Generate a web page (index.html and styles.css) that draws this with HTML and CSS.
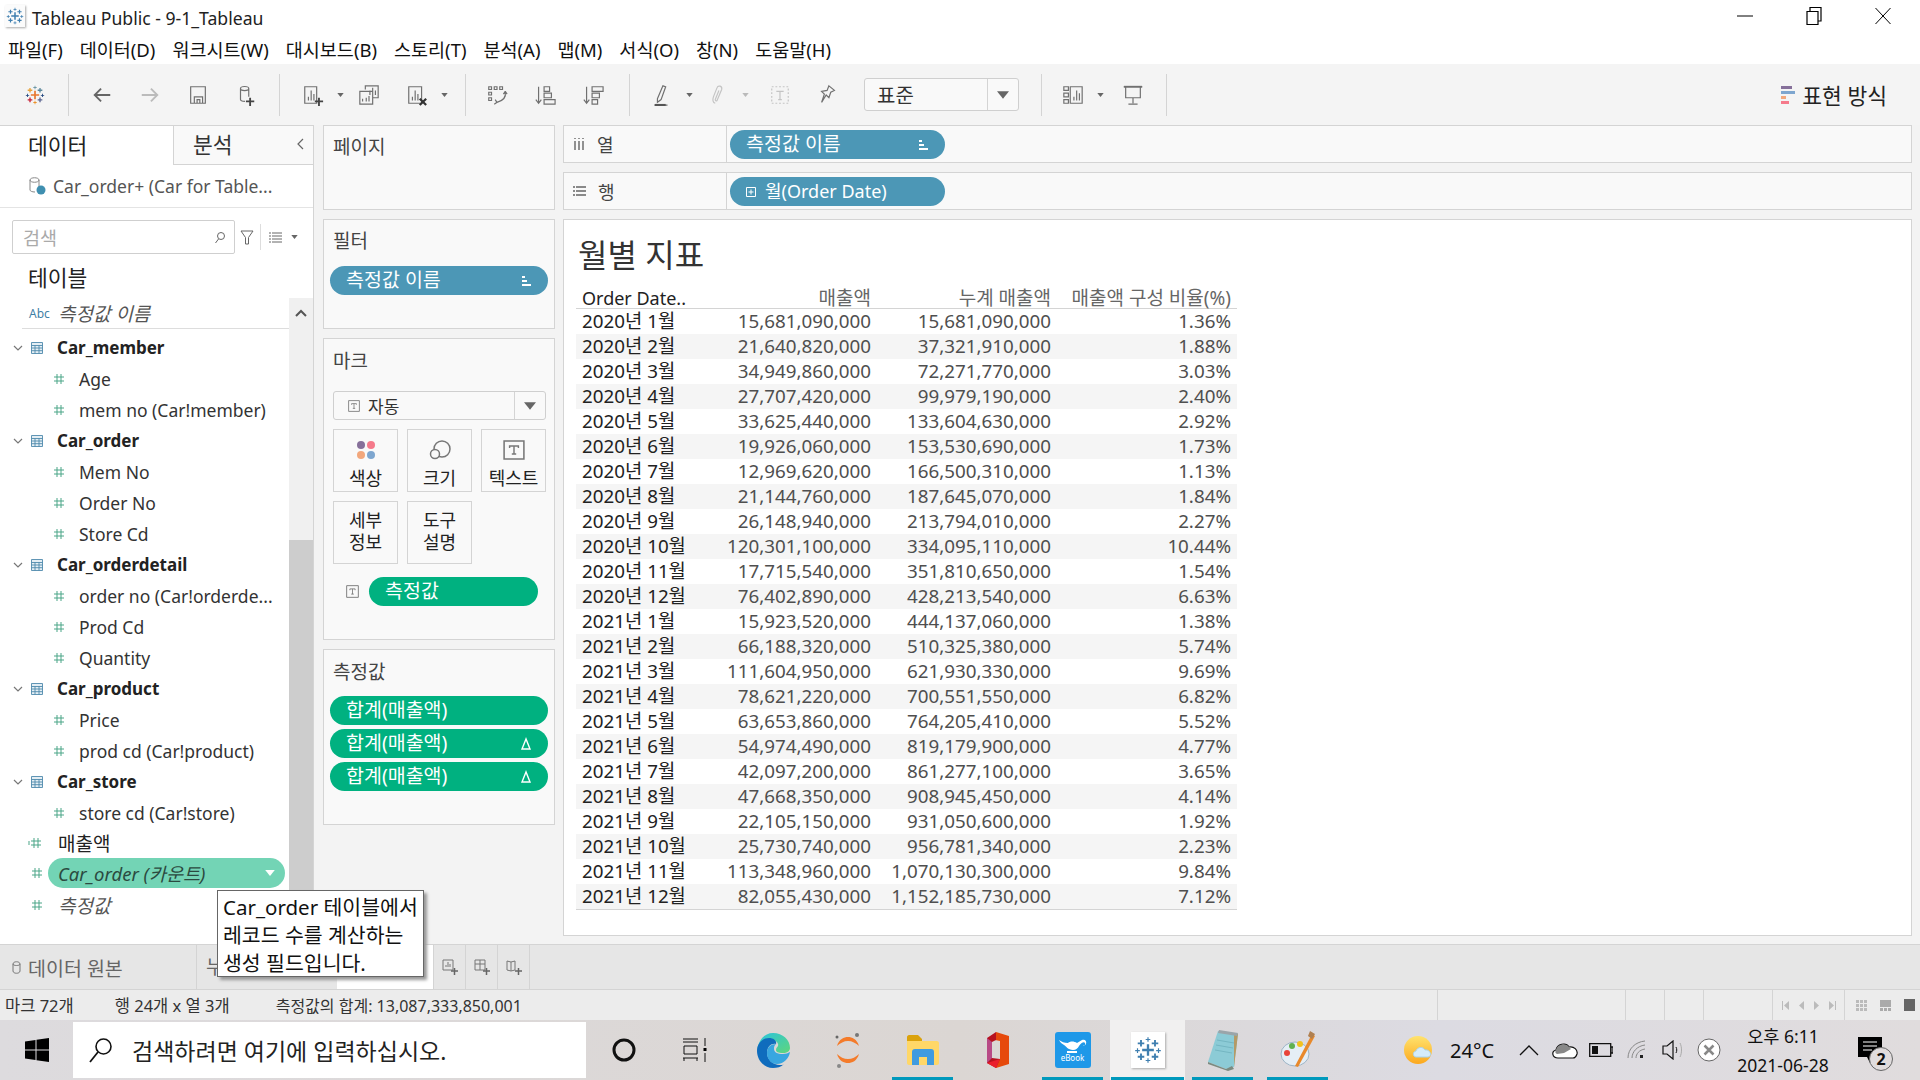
FILE: index.html
```html
<!DOCTYPE html>
<html lang="ko">

<head>
    <meta charset="UTF-8">
    <title>Tableau Public - 9-1_Tableau</title>
    <link rel="stylesheet" href="styles.css">
</head>

<body>

    <svg class="defs" width="0" height="0">
        <defs>
            <symbol id="tableau" viewBox="0 0 24 24">
                <path d="M11 7h2v4h4v2h-4v4h-2v-4H7v-2h4z" />
                <path d="M5.2 3.500h1.600v2h2v1.600h-2v2H5.200v-2h-2V5.500h2zM17.200 3.500h1.600v2h2v1.600h-2v2h-1.600v-2h-2V5.500h2zM5.200 15h1.600v2h2v1.600h-2v2H5.200v-2h-2V17h2zM17.200 15h1.600v2h2v1.600h-2v2h-1.600v-2h-2V17h2z" />
                <path d="M11.500 1h1v1.500H14v1h-1.500V5h-1V3.500H10v-1h1.500zM11.500 19h1v1.500H14v1h-1.500V23h-1v-1.500H10v-1h1.500zM2.500 10.500h1V12H5v1H3.500v1.500h-1V13H1v-1h1.500zM20.500 10.500h1V12H23v1h-1.500v1.500h-1V13H19v-1h1.500z" />
            </symbol>
            <symbol id="hash" viewBox="0 0 12 12">
                <path d="M4 1v10M8 1v10M1 4h10M1 8h10" fill="none" stroke="#4aa587" stroke-width="1" />
            </symbol>
            <symbol id="grid" viewBox="0 0 12 12">
                <path d="M.5.500h11v11H.500zM.5 3.500h11M.5 6h11M.5 8.700h11M4 3.500v8M8 3.500v8" fill="#e4eef4" stroke="#4f8aad" stroke-width=".9" />
            </symbol>
            <symbol id="chev" viewBox="0 0 10 6">
                <path d="M1 1l4 4 4-4" fill="none" stroke="#777" stroke-width="1.200" />
            </symbol>
            <symbol id="sortbars" viewBox="0 0 12 12">
                <path d="M2 1h3v2H2zM2 5h5v2H2zM2 9h9v2H2z" fill="#fff" />
            </symbol>
            <symbol id="delta" viewBox="0 0 12 14">
                <path d="M6 2L2 12h8z" fill="none" stroke="#fff" stroke-width="1.400" />
            </symbol>
            <symbol id="tbox" viewBox="0 0 20 20">
                <path d="M1 1h18v18H1z" fill="none" stroke="#777" stroke-width="1.400" />
                <path d="M6 8V6h8v2M10 6v8M8 14h4" fill="none" stroke="#777" stroke-width="1.300" />
            </symbol>
            <symbol id="caret" viewBox="0 0 8 5">
                <path d="M0 0h8L4 5z" fill="#666" />
            </symbol>
        </defs>
    </svg>

    <header class="titlebar">
        <span class="app-icon"><svg class="logo-blue" width="18" height="18"><use href="#tableau" /></svg></span>
        <span class="app-title">Tableau Public - 9-1_Tableau</span>
        <div class="win-btns">
            <svg width="16" height="16" viewBox="0 0 16 16"><path d="M0 8h16" stroke="#000" /></svg>
            <svg width="16" height="20" viewBox="0 0 16 20"><path d="M1 5.500h11v13H1zM4 5V1.500h11V15h-3" fill="none" stroke="#000" stroke-width="1.200" /></svg>
            <svg width="16" height="20" viewBox="0 0 16 20"><path d="M.5 2l15 16M15.500 2L.5 18" stroke="#000" fill="none" /></svg>
        </div>
    </header>

    <nav class="menubar">
        <span>파일(F)</span>
        <span>데이터(D)</span>
        <span>워크시트(W)</span>
        <span>대시보드(B)</span>
        <span>스토리(T)</span>
        <span>분석(A)</span>
        <span>맵(M)</span>
        <span>서식(O)</span>
        <span>창(N)</span>
        <span>도움말(H)</span>
    </nav>

    <div class="toolbar">
        <span class="tool first"><svg width="20" height="20" viewBox="0 0 24 24">
            <path d="M11 7h2v4h4v2h-4v4h-2v-4H7v-2h4z" fill="#e8762d" />
            <path d="M5.200 3.500h1.600v2h2v1.600h-2v2H5.200v-2h-2V5.500h2z" fill="#e8a33d" />
            <path d="M17.200 3.500h1.600v2h2v1.600h-2v2h-1.600v-2h-2V5.500h2z" fill="#5b879b" />
            <path d="M5.200 15h1.600v2h2v1.600h-2v2H5.200v-2h-2V17h2z" fill="#c72035" />
            <path d="M17.200 15h1.600v2h2v1.600h-2v2h-1.600v-2h-2V17h2z" fill="#5b6591" />
            <path d="M11.500 1h1v1.500H14v1h-1.500V5h-1V3.500H10v-1h1.500z" fill="#7099a6" />
            <path d="M11.500 19h1v1.500H14v1h-1.500V23h-1v-1.500H10v-1h1.500z" fill="#eb912b" />
            <path d="M2.500 10.500h1V12H5v1H3.500v1.500h-1V13H1v-1h1.500z" fill="#1f447e" />
            <path d="M20.500 10.500h1V12H23v1h-1.500v1.500h-1V13H19v-1h1.500z" fill="#1f447e" />
        </svg></span>
        <i class="sep"></i>
        <span class="tool"><svg class="ic" viewBox="0 0 24 24"><path d="M21 12H5M11 5l-7 7 7 7" stroke="#666" stroke-width="2" /></svg></span>
        <span class="tool"><svg class="ic" viewBox="0 0 24 24"><path d="M3 12h16M13 5l7 7-7 7" stroke="#bbb" stroke-width="2" /></svg></span>
        <span class="tool"><svg class="ic" viewBox="0 0 24 24"><path d="M4 3h16v18H4zM8 21v-7h9v7M11 21v-4h3v4" /></svg></span>
        <span class="tool"><svg class="ic" viewBox="0 0 24 24"><path d="M6 5c0-3 9-3 9 0v9M6 5c0 3 9 3 9 0M6 5v12c0 1 2 2 5 2" /><path d="M12 19h9M16.500 15v9" stroke="#444" stroke-width="2" /></svg></span>
        <i class="sep"></i>
        <span class="tool"><svg class="ic" viewBox="0 0 24 24"><path d="M3 3h13v18H3zM7 18v-4M10 18V7M13 18v-7" /><path d="M14 19h9M18.500 15v9" stroke="#444" stroke-width="2" /></svg></span>
        <span class="tool-drop"><svg width="7" height="4"><use href="#caret" /></svg></span>
        <span class="tool"><svg class="ic" viewBox="0 0 24 24"><path d="M8 6V2h14v13h-6M2 8h14v14H2zM5 19v-3M9 19v-4M12 19v-6M13 12V7M16 12V4M19 12V7" /></svg></span>
        <span class="tool"><svg class="ic" viewBox="0 0 24 24"><path d="M3 3h14v18H3zM7 18v-4M10 18V7M13 18v-7" /><path d="M15 16l7 7M22 16l-7 7" stroke="#333" stroke-width="2.400" /></svg></span>
        <span class="tool-drop"><svg width="7" height="4"><use href="#caret" /></svg></span>
        <i class="sep sep-a"></i>
        <span class="tool"><svg class="ic" viewBox="0 0 24 24"><path d="M3 3h3v3H3zM9 3h3v3H9zM15 3h3v3h-3zM3 9h3v3H3zM3 15h3v3H3zM21 9c1 5-2 9-9 11M9 22l3-2-2-3M21 8l-2 3M21 8l2 3" /></svg></span>
        <span class="tool"><svg class="ic" viewBox="0 0 24 24"><path d="M5 3v18M2 17l3 4 3-4M11 3h6v5h-6zM11 10h8v5h-8zM11 17h12v5H11z" /></svg></span>
        <span class="tool"><svg class="ic" viewBox="0 0 24 24"><path d="M5 3v18M2 17l3 4 3-4M11 3h12v5H11zM11 10h8v5h-8zM11 17h6v5h-6z" /></svg></span>
        <i class="sep sep-b"></i>
        <span class="tool"><svg class="ic" viewBox="0 0 24 24"><path d="M7 16L13 2l3 1-5 14-4 3zM4 23h14" /><path d="M4 23h12" stroke="#555" stroke-width="2.500" /></svg></span>
        <span class="tool-drop"><svg width="7" height="4"><use href="#caret" /></svg></span>
        <span class="tool"><svg class="ic faint" viewBox="0 0 24 24"><path d="M9 21c-3-1-3-4-2-7l4-10c1-3 6-2 5 2l-5 12c-1 1-2 0-2-1l4-10" /></svg></span>
        <span class="tool-drop faint clip-drop"><svg width="7" height="4"><use href="#caret" /></svg></span>
        <span class="tool"><svg class="ic faint" viewBox="0 0 24 24"><path d="M3 3h18v18H3z" stroke-dasharray="2 2" /><path d="M8 8h8M12 8v9M10 17h4" /></svg></span>
        <span class="tool"><svg class="ic" viewBox="0 0 24 24"><path d="M13 2l6 5-4 2-2 6-3-3-5 8 3-9-3-3 6-1z" /></svg></span>
        <div class="mark-select std">
            <span class="select-text">표준</span>
            <span class="select-arrow"><svg width="12" height="8"><use href="#caret" /></svg></span>
        </div>
        <i class="sep sep-c"></i>
        <span class="tool"><svg class="ic" viewBox="0 0 24 24"><path d="M2 3h5v4H2zM2 10h5v4H2zM2 17h5v4H2zM9 3h13v18H9zM13 18v-4M16 18V7M19 18v-8" /></svg></span>
        <span class="tool-drop show-drop"><svg width="7" height="4"><use href="#caret" /></svg></span>
        <span class="tool"><svg class="ic" viewBox="0 0 24 24"><path d="M2 3h20M4 3v12h16V3M12 15v6M7 22h10" /><path d="M2 3h20" stroke-width="2" /></svg></span>
        <i class="sep"></i>
        <div class="show-me">
            <svg width="14" height="18" viewBox="0 0 14 18">
                <rect width="11" height="3" fill="#86709a" />
                <rect y="5" width="14" height="3" fill="#7ea6cf" />
                <rect y="10" width="5" height="3" fill="#f2a77c" />
                <rect y="15" width="8" height="3" fill="#f57a8b" />
            </svg>
            <span>표현 방식</span>
        </div>
    </div>

    <main class="workspace">

        <aside class="data-panel">
            <div class="panel-tabs">
                <div class="tab active">데이터</div>
                <div class="tab other">분석<svg class="collapse" width="7" height="12" viewBox="0 0 7 12"><path d="M6 1L1 6l5 5" fill="none" stroke="#666" stroke-width="1.200" /></svg></div>
            </div>
            <div class="source-row">
                <svg width="18" height="20" viewBox="0 0 18 20"><path d="M2 4c0-3 9-3 9 0v7M2 4c0 3 9 3 9 0M2 4v10c0 1 2 2 5 2" fill="none" stroke="#888" /><circle cx="13" cy="14" r="4.500" fill="#3f8fb0" /></svg>
                <span>Car_order+ (Car for Table...</span>
            </div>
            <div class="search-row">
                <div class="search-box">
                    <span>검색</span>
                    <svg width="12" height="13" viewBox="0 0 12 13"><circle cx="7" cy="5" r="3.500" fill="none" stroke="#666" /><path d="M4.500 8L1.500 12" stroke="#666" /></svg>
                </div>
                <svg class="funnel" width="14" height="15" viewBox="0 0 14 15"><path d="M1 1h12L8.500 7.500V14h-3V7.500z" fill="none" stroke="#666" /></svg>
                <i class="search-div"></i>
                <svg width="13" height="11" viewBox="0 0 13 11"><path d="M0 1h2M3 1h10M0 4h2M3 4h10M0 7h2M3 7h10M0 10h2M3 10h10" stroke="#666" /></svg>
                <svg class="search-caret" width="7" height="4"><use href="#caret" /></svg>
            </div>
            <div class="tables-head">테이블</div>

            <div class="list-wrap">
                <div class="field-list">
                    <div class="row names"><span class="abc">Abc</span><em>측정값 이름</em></div>

                    <div class="row table-row"><svg class="chev" width="10" height="6"><use href="#chev" /></svg><svg width="12" height="12"><use href="#grid" /></svg><b>Car_member</b></div>
                    <div class="row field"><svg width="12" height="12"><use href="#hash" /></svg>Age</div>
                    <div class="row field"><svg width="12" height="12"><use href="#hash" /></svg>mem no (Car!member)</div>

                    <div class="row table-row"><svg class="chev" width="10" height="6"><use href="#chev" /></svg><svg width="12" height="12"><use href="#grid" /></svg><b>Car_order</b></div>
                    <div class="row field"><svg width="12" height="12"><use href="#hash" /></svg>Mem No</div>
                    <div class="row field"><svg width="12" height="12"><use href="#hash" /></svg>Order No</div>
                    <div class="row field"><svg width="12" height="12"><use href="#hash" /></svg>Store Cd</div>

                    <div class="row table-row"><svg class="chev" width="10" height="6"><use href="#chev" /></svg><svg width="12" height="12"><use href="#grid" /></svg><b>Car_orderdetail</b></div>
                    <div class="row field"><svg width="12" height="12"><use href="#hash" /></svg>order no (Car!orderde...</div>
                    <div class="row field"><svg width="12" height="12"><use href="#hash" /></svg>Prod Cd</div>
                    <div class="row field"><svg width="12" height="12"><use href="#hash" /></svg>Quantity</div>

                    <div class="row table-row"><svg class="chev" width="10" height="6"><use href="#chev" /></svg><svg width="12" height="12"><use href="#grid" /></svg><b>Car_product</b></div>
                    <div class="row field"><svg width="12" height="12"><use href="#hash" /></svg>Price</div>
                    <div class="row field"><svg width="12" height="12"><use href="#hash" /></svg>prod cd (Car!product)</div>

                    <div class="row table-row"><svg class="chev" width="10" height="6"><use href="#chev" /></svg><svg width="12" height="12"><use href="#grid" /></svg><b>Car_store</b></div>
                    <div class="row field"><svg width="12" height="12"><use href="#hash" /></svg>store cd (Car!store)</div>

                    <div class="row calc sales"><svg width="14" height="12" viewBox="-2 0 14 12"><path d="M-2 5h2M-2 7h2" stroke="#4aa587" /><use href="#hash" width="12" height="12" /></svg>매출액</div>
                    <div class="row calc count"><svg width="12" height="12"><use href="#hash" /></svg><div class="count-pill"><em>Car_order (카운트)</em><svg width="10" height="6" viewBox="0 0 8 5"><path d="M0 0h8L4 5z" fill="#fff" /></svg></div></div>
                    <div class="row calc last"><svg width="12" height="12"><use href="#hash" /></svg><em>측정값</em></div>
                </div>
                <div class="scrollbar">
                    <div class="scroll-up"><svg width="12" height="8" viewBox="0 0 12 8"><path d="M1 7l5-5 5 5" fill="none" stroke="#555" stroke-width="2" /></svg></div>
                    <div class="scroll-thumb"></div>
                </div>
            </div>
        </aside>

        <section class="cards-col">
            <div class="card card-pages"><h3>페이지</h3></div>
            <div class="card card-filters">
                <h3>필터</h3>
                <div class="pill blue">측정값 이름<svg width="12" height="12"><use href="#sortbars" /></svg></div>
            </div>
            <div class="card card-marks">
                <h3>마크</h3>
                <div class="mark-select auto">
                    <span class="select-text"><svg width="12" height="12" viewBox="0 0 20 20"><use href="#tbox" /></svg>자동</span>
                    <span class="select-arrow"><svg width="12" height="8"><use href="#caret" /></svg></span>
                </div>
                <div class="mark-grid">
                    <div class="mark-btn">
                        <svg width="20" height="20" viewBox="0 0 20 20">
                            <circle cx="5" cy="5" r="4" fill="#86709a" />
                            <circle cx="15" cy="5" r="4" fill="#f57a8b" />
                            <circle cx="5" cy="15" r="4" fill="#f2a77c" />
                            <circle cx="15" cy="15" r="4" fill="#7ea6cf" />
                        </svg>
                        <span>색상</span>
                    </div>
                    <div class="mark-btn">
                        <svg width="22" height="20" viewBox="0 0 22 20"><circle cx="13" cy="9" r="8" fill="none" stroke="#777" stroke-width="1.500" /><circle cx="6" cy="14" r="4.500" fill="#f9f9f9" stroke="#777" stroke-width="1.500" /></svg>
                        <span>크기</span>
                    </div>
                    <div class="mark-btn">
                        <svg width="22" height="20" viewBox="0 0 20 20" preserveAspectRatio="none"><use href="#tbox" /></svg>
                        <span>텍스트</span>
                    </div>
                    <div class="mark-btn two">세부<br>정보</div>
                    <div class="mark-btn two">도구<br>설명</div>
                </div>
                <div class="mark-pill-row">
                    <svg width="13" height="13" viewBox="0 0 20 20"><use href="#tbox" /></svg>
                    <div class="pill green short">측정값</div>
                </div>
            </div>
            <div class="card card-measures">
                <h3>측정값</h3>
                <div class="pill green">합계(매출액)</div>
                <div class="pill green">합계(매출액)<svg width="12" height="14"><use href="#delta" /></svg></div>
                <div class="pill green">합계(매출액)<svg width="12" height="14"><use href="#delta" /></svg></div>
            </div>
        </section>

        <section class="view-col">
            <div class="shelf">
                <div class="shelf-label"><svg width="12" height="14" viewBox="0 0 12 14"><path d="M2 1v1M6 1v1M10 1v1M2 4v9M6 4v9M10 4v9" stroke="#666" stroke-width="1.400" /></svg>열</div>
                <div class="shelf-body"><div class="pill blue wide">측정값 이름<svg width="12" height="12"><use href="#sortbars" /></svg></div></div>
            </div>
            <div class="shelf">
                <div class="shelf-label"><svg width="13" height="12" viewBox="0 0 13 12"><path d="M0 2h2M3 2h10M0 6h2M3 6h10M0 10h2M3 10h10" stroke="#666" stroke-width="1.400" /></svg>행</div>
                <div class="shelf-body"><div class="pill blue wide date"><svg width="10" height="10" viewBox="0 0 10 10"><path d="M.5.500h9v9h-9zM2.500 5h5M5 2.500v5" fill="none" stroke="#fff" /></svg>월(Order Date)</div></div>
            </div>
            <div class="view">
                <h2>월별 지표</h2>
                <div class="grid-table">
                    <div class="t-row t-head"><span>Order Date..</span><span>매출액</span><span>누계 매출액</span><span>매출액 구성 비율(%)</span></div>
                    <div class="t-row"><span>2020년 1월</span><span>15,681,090,000</span><span>15,681,090,000</span><span>1.36%</span></div>
                    <div class="t-row"><span>2020년 2월</span><span>21,640,820,000</span><span>37,321,910,000</span><span>1.88%</span></div>
                    <div class="t-row"><span>2020년 3월</span><span>34,949,860,000</span><span>72,271,770,000</span><span>3.03%</span></div>
                    <div class="t-row"><span>2020년 4월</span><span>27,707,420,000</span><span>99,979,190,000</span><span>2.40%</span></div>
                    <div class="t-row"><span>2020년 5월</span><span>33,625,440,000</span><span>133,604,630,000</span><span>2.92%</span></div>
                    <div class="t-row"><span>2020년 6월</span><span>19,926,060,000</span><span>153,530,690,000</span><span>1.73%</span></div>
                    <div class="t-row"><span>2020년 7월</span><span>12,969,620,000</span><span>166,500,310,000</span><span>1.13%</span></div>
                    <div class="t-row"><span>2020년 8월</span><span>21,144,760,000</span><span>187,645,070,000</span><span>1.84%</span></div>
                    <div class="t-row"><span>2020년 9월</span><span>26,148,940,000</span><span>213,794,010,000</span><span>2.27%</span></div>
                    <div class="t-row"><span>2020년 10월</span><span>120,301,100,000</span><span>334,095,110,000</span><span>10.44%</span></div>
                    <div class="t-row"><span>2020년 11월</span><span>17,715,540,000</span><span>351,810,650,000</span><span>1.54%</span></div>
                    <div class="t-row"><span>2020년 12월</span><span>76,402,890,000</span><span>428,213,540,000</span><span>6.63%</span></div>
                    <div class="t-row"><span>2021년 1월</span><span>15,923,520,000</span><span>444,137,060,000</span><span>1.38%</span></div>
                    <div class="t-row"><span>2021년 2월</span><span>66,188,320,000</span><span>510,325,380,000</span><span>5.74%</span></div>
                    <div class="t-row"><span>2021년 3월</span><span>111,604,950,000</span><span>621,930,330,000</span><span>9.69%</span></div>
                    <div class="t-row"><span>2021년 4월</span><span>78,621,220,000</span><span>700,551,550,000</span><span>6.82%</span></div>
                    <div class="t-row"><span>2021년 5월</span><span>63,653,860,000</span><span>764,205,410,000</span><span>5.52%</span></div>
                    <div class="t-row"><span>2021년 6월</span><span>54,974,490,000</span><span>819,179,900,000</span><span>4.77%</span></div>
                    <div class="t-row"><span>2021년 7월</span><span>42,097,200,000</span><span>861,277,100,000</span><span>3.65%</span></div>
                    <div class="t-row"><span>2021년 8월</span><span>47,668,350,000</span><span>908,945,450,000</span><span>4.14%</span></div>
                    <div class="t-row"><span>2021년 9월</span><span>22,105,150,000</span><span>931,050,600,000</span><span>1.92%</span></div>
                    <div class="t-row"><span>2021년 10월</span><span>25,730,740,000</span><span>956,781,340,000</span><span>2.23%</span></div>
                    <div class="t-row"><span>2021년 11월</span><span>113,348,960,000</span><span>1,070,130,300,000</span><span>9.84%</span></div>
                    <div class="t-row"><span>2021년 12월</span><span>82,055,430,000</span><span>1,152,185,730,000</span><span>7.12%</span></div>
                </div>
            </div>
        </section>
    </main>

    <!-- hover tip over the field list -->
    <div class="tooltip">Car_order 테이블에서<br>레코드 수를 계산하는<br>생성 필드입니다.</div>

    <div class="tabbar">
        <div class="ds-tab">
            <svg width="9" height="13" viewBox="0 0 9 13"><path d="M1 3c0-3 7-3 7 0v7c0 3-7 3-7 0zM1 3c0 2 7 2 7 0" fill="none" stroke="#777" /></svg>
            데이터 원본
        </div>
        <div class="sheet-tab">누</div>
        <div class="sheet-tab active"></div>
        <div class="add-tab"><svg width="16" height="16" viewBox="0 0 16 16"><path d="M1 1h10v10H1zM4 8V6M6 8V3M8 8V5" fill="none" stroke="#777" /><path d="M9 12h7M12.500 9v7" stroke="#666" stroke-width="1.500" /></svg></div>
        <div class="add-tab"><svg width="16" height="16" viewBox="0 0 16 16"><path d="M1 1h10v10H1zM1 5h10M6 1v10" fill="none" stroke="#777" /><path d="M9 12h7M12.500 9v7" stroke="#666" stroke-width="1.500" /></svg></div>
        <div class="add-tab"><svg width="16" height="16" viewBox="0 0 16 16"><path d="M1 2l4 1 4-1v9l-4 1-4-1zM5 3v9" fill="none" stroke="#777" /><path d="M9 12h7M12.500 9v7" stroke="#666" stroke-width="1.500" /></svg></div>
    </div>

    <footer class="statusbar">
        <span class="st-marks">마크 72개</span>
        <span class="st-rows">행 24개 x 열 3개</span>
        <span class="st-sum">측정값의 합계: 13,087,333,850,001</span>
        <div class="st-cells">
            <i class="c1"></i><i class="c2"></i><i class="c3"></i><i class="c4"></i>
            <div class="st-nav">
                <svg width="7" height="9" viewBox="0 0 7 9"><path d="M0 0h1v9H0zM7 0v9L2 4.500z" /></svg>
                <svg width="5" height="9" viewBox="0 0 5 9"><path d="M5 0v9L0 4.500z" /></svg>
                <svg width="5" height="9" viewBox="0 0 5 9"><path d="M0 0v9l5-4.500z" /></svg>
                <svg width="7" height="9" viewBox="0 0 7 9"><path d="M6 0h1v9H6zM0 0v9l5-4.500z" /></svg>
            </div>
            <div class="st-views">
                <svg width="11" height="11" viewBox="0 0 11 11"><path d="M0 0h3v3H0zM4 0h3v3H4zM8 0h3v3H8zM0 4h3v3H0zM4 4h3v3H4zM8 4h3v3H8zM0 8h3v3H0zM4 8h3v3H4zM8 8h3v3H8z" fill="#bbb" /></svg>
                <svg width="11" height="11" viewBox="0 0 11 11"><path d="M0 0h11v7H0zM0 8h3v3H0zM4 8h3v3H4zM8 8h3v3H8z" fill="#aaa" /></svg>
                <svg width="11" height="12" viewBox="0 0 11 12"><path d="M0 0h11v12H0z" fill="#666" /></svg>
            </div>
        </div>
    </footer>

    <div class="taskbar">
        <div class="start"><svg width="24" height="24" viewBox="0 0 24 24"><path d="M0 3.500l10.500-1.500v9.500H0zM11.500 1.800L24 0v11.500H11.500zM0 12.500h10.500V22L0 20.500zM11.500 12.500H24V24l-12.500-1.800z" /></svg></div>
        <div class="task-search">
            <svg width="24" height="26" viewBox="0 0 24 26"><circle cx="14.500" cy="9.500" r="7.500" fill="none" stroke="#111" stroke-width="1.600" /><path d="M9 15L1 25" stroke="#111" stroke-width="1.800" /></svg>
            <span>검색하려면 여기에 입력하십시오.</span>
        </div>
        <div class="app cortana"><svg width="24" height="24" viewBox="0 0 24 24"><circle cx="12" cy="12" r="10" fill="none" stroke="#111" stroke-width="3" /></svg></div>
        <div class="app taskview"><svg width="24" height="24" viewBox="0 0 24 24"><path d="M0 1h15M0 4h15M1 8h13v8H1zM0 20h15M1 20v3M14 20v3M22 0v8M22 15v9" fill="none" stroke="#111" /><path d="M20.500 10h3v3h-3z" /></svg></div>
        <div class="app"><svg width="36" height="36" viewBox="0 0 36 36">
            <defs><linearGradient id="edge" x1="0" y1="0" x2="1" y2="1"><stop offset="0" stop-color="#29c3e0" /><stop offset="1" stop-color="#5fd67a" /></linearGradient></defs>
            <path d="M18 1c10 0 17 7 17 15 0 3-3 5-7 5-5 0-7-1-7-3 0-3 3-3 2-6-1-4-6-5-10-4-6 2-11 8-11 11C3 9 9 1 18 1z" fill="url(#edge)" />
            <path d="M2 19c0-8 6-13 12-13 5 0 8 3 7 6-4-1-9 2-9 9 0 7 6 12 13 12 2 0 3 0 4-1-3 3-7 4-11 4C9 36 2 28 2 19z" fill="#0f6cbd" />
            <path d="M12 21c0-6 4-9 9-9-2 2-2 3-2 5 0 3 3 5 9 5 3 0 5-1 7-2-1 6-6 12-13 12-6 0-10-5-10-11z" fill="#1b9de2" opacity=".85" />
        </svg></div>
        <div class="app"><svg width="26" height="36" viewBox="0 0 26 36"><path d="M2 14C4 7 9 5 13 5s9 2 11 9c-3-3-7-5-11-5S5 11 2 14zM2 22c3 3 7 5 11 5s8-2 11-5c-2 7-7 9-11 9S4 29 2 22z" fill="#f47b2a" /><circle cx="2" cy="5" r="1.500" fill="#666" /><circle cx="22" cy="3" r="2" fill="#777" /><circle cx="4" cy="34" r="2" fill="#888" /></svg></div>
        <div class="app open"><svg width="32" height="30" viewBox="0 0 32 30"><path d="M0 2c0-1 1-2 2-2h9l4 4v4H0z" fill="#dba20c" /><path d="M0 6h30c1 0 2 1 2 2v20c0 1-1 2-2 2H2c-1 0-2-1-2-2z" fill="#ffd767" /><path d="M5 30V17c0-2 1-3 3-3h16c2 0 3 1 3 3v13h-7v-8h-8v8z" fill="#3f9be0" /></svg></div>
        <div class="app"><svg width="28" height="36" viewBox="0 0 28 36"><path d="M12 0l13 4v28l-13 4-1-8 5-1V9l-5-1z" fill="#e64a0c" /><path d="M3 6l9-6v8L8 10v16l8 1-4 9-9-5z" fill="#b7121f" /><path d="M3 6l5 4v16l-5 5z" fill="#b84a86" /><path d="M12 36l-9-5 13-4z" fill="#ea1f2c" /></svg></div>
        <div class="app open"><div class="ebook"><svg width="30" height="16" viewBox="0 0 30 16"><path d="M1 3c3 2 5 3 9 3 2-2 6-2 9 0l5-3c3-1 5 1 4 4-1 2-3 2-3 1 1 1 3 0 2-2-1-2-4 0-6 3-1 2-3 4-6 4-5 0-7-4-9-5C4 7 2 5 1 3zM9 14h10v2H9z" fill="#fff" /></svg><span>eBook</span></div></div>
        <div class="app open active"><span class="page-icon"><svg class="logo-blue" width="28" height="28"><use href="#tableau" /></svg></span></div>
        <div class="app open"><svg width="34" height="42" viewBox="0 0 34 42"><path d="M12 2l20 3-4 33-8 2-18-7z" fill="#8ccbd6" /><path d="M2 33l18 7 6-3 2 3-6 2-20-7z" fill="#7b8a80" /><path d="M28 5l4 0-4 33z" fill="#b59a66" /><path d="M13 1l19 3-1 3-19-3z" fill="#9aa5aa" /><path d="M11 11l17 3M10 16l17 3M9 21l17 3" stroke="#74b6c2" fill="none" /></svg></div>
        <div class="app open"><svg width="36" height="38" viewBox="0 0 36 38"><ellipse cx="15" cy="23" rx="14" ry="12" fill="#e5eef5" stroke="#9db4c6" /><circle cx="7" cy="22" r="3" fill="#e8443a" /><circle cx="12" cy="15" r="3" fill="#60b050" /><circle cx="20" cy="13" r="3" fill="#f2c220" /><path d="M32 3l3 2-17 31-3-1z" fill="#e8892b" /><path d="M30 0l5 3-3 5-4-3z" fill="#b08050" /></svg></div>

        <div class="tray">
            <div class="weather">
                <svg width="30" height="32" viewBox="0 0 30 32">
                    <defs><linearGradient id="sun" x1="0" y1="0" x2="0" y2="1"><stop offset="0" stop-color="#ffe36e" /><stop offset="1" stop-color="#fca81e" /></linearGradient></defs>
                    <circle cx="14" cy="16" r="14" fill="url(#sun)" />
                    <path d="M12 23c-3 0-4-5 0-6 1-4 7-5 9-1 5-1 8 6 3 7z" fill="#d5ecfa" stroke="#a8d4ee" />
                </svg>
                <span>24°C</span>
            </div>
            <div class="tray-icon"><svg width="20" height="12" viewBox="0 0 20 12"><path d="M1 11l9-9 9 9" fill="none" stroke="#111" stroke-width="1.300" /></svg></div>
            <div class="tray-icon"><svg width="26" height="18" viewBox="0 0 26 18"><path d="M6 17c-6 0-7-7-2-8 1-6 10-8 13-3 5-1 9 3 8 7-1 3-2 4-4 4z" fill="#fff" stroke="#111" stroke-width="1.200" /><path d="M4 9c1-6 10-8 13-3l2 2-7 4-7 1c-2-1-2-2-1-4z" fill="#888" /></svg></div>
            <div class="tray-icon"><svg width="24" height="14" viewBox="0 0 24 14"><path d="M.7.700h21v12.600H.7zM22 4h2v6h-2z" fill="none" stroke="#111" stroke-width="1.300" /><path d="M3 3h6v8H3z" fill="#111" /></svg></div>
            <div class="tray-icon"><svg width="20" height="20" viewBox="0 0 20 20"><path d="M1 18C1 9 8 2 18 1M5 18c0-6 5-12 13-13M9 18c0-4 3-8 9-9" fill="none" stroke="#888" /><path d="M13 15h3v3h-3z" fill="#222" /></svg></div>
            <div class="tray-icon"><svg width="22" height="20" viewBox="0 0 22 20"><path d="M1 6h4l6-5v18l-6-5H1z" fill="none" stroke="#111" stroke-width="1.200" /><path d="M14 7c1 2 1 4 0 6" fill="none" stroke="#111" /><path d="M18 3c2 4 2 10 0 14" fill="none" stroke="#aaa" /></svg></div>
            <div class="tray-icon"><svg width="24" height="24" viewBox="0 0 24 24"><circle cx="12" cy="12" r="11" fill="#fff" stroke="#666" /><path d="M7.500 7.500l9 9M16.500 7.500l-9 9" stroke="#888" stroke-width="2.500" /></svg></div>
            <div class="clock"><span>오후 6:11</span><span>2021-06-28</span></div>
            <div class="notify">
                <svg width="24" height="26" viewBox="0 0 24 26"><path d="M0 0h24v20h-8l-4 6-3-6H0z" /><path d="M5 5h14M5 9h14M5 13h9" stroke="#fff" /></svg>
                <span class="notify-badge">2</span>
            </div>
        </div>
    </div>

</body>

</html>
```
FILE: styles.css
```css
html,
body {
    margin: 0;
    padding: 0;
}

body {
    width: 1920px;
    height: 1080px;
    overflow: hidden;
    position: relative;
    display: flex;
    flex-direction: column;
    background-color: #fff;
    color: #333;
    font-family: "Noto Sans", "Noto Sans CJK KR", sans-serif;
    font-size: 18px;
}

svg {
    flex: none;
    display: block;
}

.defs {
    position: absolute;
}

.logo-blue {
    fill: #3f7fb0;
}

/* Title bar and menu */
.titlebar {
    height: 32px;
    display: flex;
    align-items: center;
    padding-left: 5px;
    box-sizing: border-box;
}

.app-icon {
    width: 20px;
    height: 22px;
    display: flex;
    align-items: center;
    justify-content: center;
    background-color: #fbfbfb;
    box-shadow: 1px 1px 2px #aaa;
}

.app-title {
    margin-left: 7px;
    padding-top: 3px;
    font-size: 17.600px;
    color: #222;
}

.win-btns {
    margin-left: auto;
    display: flex;
    align-items: center;
    gap: 53px;
    padding-right: 29px;
}

.menubar {
    height: 32px;
    display: flex;
    align-items: center;
    padding: 2px 0 0 8px;
    box-sizing: border-box;
    gap: 17px;
    font-size: 18.500px;
    color: #111;
}

/* Toolbar */
.toolbar {
    height: 61px;
    display: flex;
    align-items: center;
    background-color: #f4f4f4;
}

.tool {
    width: 48px;
    display: flex;
    justify-content: center;
}

.tool.first {
    margin-left: 11px;
}

.ic {
    width: 22px;
    height: 22px;
    fill: none;
    stroke: #707070;
    stroke-width: 1.300;
}

.ic.faint {
    stroke: #c4c4c4;
}

.tool-drop {
    width: 12px;
    margin: 0 -1px 0 -3px;
    display: flex;
    justify-content: center;
}

.tool-drop.faint {
    opacity: .4;
}

.tool-drop.clip-drop {
    margin-right: 5px;
}

.tool-drop.show-drop {
    margin-right: 3px;
}

.sep {
    width: 1px;
    height: 42px;
    margin: 0 9px;
    background-color: #d4d4d4;
}

.sep.sep-a {
    margin: 0 7px 0 16px;
}

.sep.sep-b {
    margin: 0 8px 0 12px;
}

.sep.sep-c {
    margin: 0 7px 0 22px;
}

.mark-select {
    display: flex;
    box-sizing: border-box;
    background-color: #f9f9f9;
    border: 1px solid #cfcfcf;
    border-radius: 3px;
    color: #333;
}

.mark-select.std {
    width: 155px;
    height: 33px;
    margin-left: 12px;
    font-size: 20px;
}

.mark-select.auto {
    height: 29px;
    margin: 0 8px 9px 9px;
    font-size: 17px;
}

.select-text {
    flex: 1;
    display: flex;
    align-items: center;
    gap: 8px;
    padding-left: 12px;
}

.mark-select.auto .select-text {
    padding-left: 14px;
}

.select-arrow {
    width: 30px;
    display: flex;
    align-items: center;
    justify-content: center;
    border-left: 1px solid #d4d4d4;
}

.show-me {
    margin-left: auto;
    padding-right: 33px;
    display: flex;
    align-items: center;
    gap: 7px;
    font-size: 21.500px;
    color: #222;
}

/* Main area */
.workspace {
    height: 819px;
    display: flex;
    background-color: #f3f3f3;
}

.data-panel {
    width: 314px;
    display: flex;
    flex-direction: column;
    box-sizing: border-box;
    background-color: #fff;
    border-top: 1px solid #d4d4d4;
    border-right: 1px solid #d4d4d4;
}

.panel-tabs {
    height: 39px;
    display: flex;
    font-size: 21.500px;
}

.tab {
    display: flex;
    align-items: center;
    padding-bottom: 3px;
    box-sizing: border-box;
}

.tab.active {
    width: 173px;
    padding-left: 28px;
    color: #222;
}

.tab.other {
    flex: 1;
    padding-left: 19px;
    background-color: #f9f9f9;
    border-left: 1px solid #d4d4d4;
    border-bottom: 1px solid #d4d4d4;
}

.collapse {
    margin-left: auto;
    margin-right: 9px;
}

.source-row {
    height: 43px;
    display: flex;
    align-items: center;
    gap: 7px;
    padding-left: 28px;
    box-sizing: border-box;
    border-bottom: 1px solid #e4e4e4;
    font-size: 17.500px;
    color: #555;
}

.search-row {
    height: 34px;
    margin-top: 12px;
    display: flex;
    align-items: center;
    padding-left: 12px;
}

.search-box {
    width: 223px;
    height: 34px;
    display: flex;
    align-items: center;
    justify-content: space-between;
    padding: 0 8px 0 10px;
    box-sizing: border-box;
    border: 1px solid #cfcfcf;
    border-radius: 2px;
    color: #aaa;
    font-size: 18.500px;
}

.funnel {
    margin-left: 5px;
}

.search-div {
    width: 1px;
    height: 26px;
    margin: 0 8px 0 6px;
    background-color: #ddd;
}

.search-caret {
    margin-left: 9px;
}

.tables-head {
    height: 44px;
    display: flex;
    align-items: center;
    padding-left: 28px;
    font-size: 21.500px;
    color: #222;
}

.list-wrap {
    flex: 1;
    display: flex;
    min-height: 0;
}

.field-list {
    width: 289px;
    flex: none;
    font-size: 17.500px;
}

.row {
    height: 31px;
    display: flex;
    align-items: center;
    box-sizing: border-box;
    white-space: nowrap;
    color: #333;
}

.row em {
    color: #555;
    font-size: 19px;
}

.row.names {
    height: 31px;
    margin: 0 0 3px 22px;
    padding-left: 7px;
    border-bottom: 1px solid #ddd;
}

.abc {
    width: 29px;
    font-size: 12px;
    color: #3f7fa6;
}

.table-row svg:first-child {
    margin-left: 13px;
}

.table-row .chev {
    margin-right: 8px;
}

.table-row b {
    margin-left: 14px;
    font-size: 17px;
    color: #222;
}

.row.field {
    padding-left: 53px;
    gap: 14px;
}

.row.calc {
    padding-left: 31px;
}

.row.calc svg:first-child {
    margin-right: 15px;
}

.row.sales {
    height: 30px;
    padding-left: 28px;
    font-size: 19px;
    color: #222;
}

.row.sales svg:first-child {
    margin-right: 16px;
}

.row.count {
    height: 30px;
}

.row.count svg:first-child {
    margin-right: 5px;
}

.count-pill {
    width: 237px;
    height: 30px;
    display: flex;
    align-items: center;
    justify-content: space-between;
    padding: 0 10px;
    box-sizing: border-box;
    border-radius: 15px;
    background-color: #73d4b5;
}

.count-pill em {
    color: #2b4a40;
    font-size: 18.500px;
}

.row.last {
    height: 34px;
}

.scrollbar {
    flex: 1;
    display: flex;
    flex-direction: column;
    background-color: #f0f0f0;
}

.scroll-up {
    height: 30px;
    display: flex;
    align-items: center;
    justify-content: center;
}

.scroll-thumb {
    margin-top: auto;
    height: 404px;
    background-color: #cdcdcd;
}

/* Pages, filters, marks, measures */
.cards-col {
    width: 232px;
    margin-left: 9px;
    display: flex;
    flex-direction: column;
    gap: 9px;
}

.card {
    box-sizing: border-box;
    background-color: #f9f9f9;
    border: 1px solid #d4d4d4;
}

.card h3 {
    margin: 0;
    font-size: 19px;
    font-weight: 400;
    color: #444;
    padding: 6px 0 0 9px;
    height: 39px;
    box-sizing: border-box;
}

.card-pages {
    height: 85px;
}

.card-filters {
    height: 110px;
}

.card-marks {
    height: 302px;
}

.card-measures {
    height: 176px;
}

.card-filters .pill {
    margin: 7px 6px 0;
}

.card-marks h3 {
    height: 52px;
    padding-top: 7px;
}

.card-measures h3 {
    height: 46px;
    padding-top: 7px;
}

.pill {
    height: 29px;
    display: flex;
    align-items: center;
    justify-content: space-between;
    padding: 0 16px 5px;
    box-sizing: border-box;
    border-radius: 15px;
    color: #fff;
    font-size: 19.500px;
    white-space: nowrap;
}

.pill svg {
    margin-top: 5px;
}

.pill.blue {
    background-color: #4c97b6;
}

.pill.green {
    background-color: #00b180;
}

.card-measures .pill {
    margin: 0 6px 4px;
}

.mark-grid {
    display: grid;
    grid-template-columns: 65px 65px 65px;
    grid-auto-rows: 63px;
    gap: 9px;
    margin-left: 9px;
}

.mark-btn {
    display: flex;
    flex-direction: column;
    align-items: center;
    justify-content: flex-end;
    gap: 5px;
    padding-bottom: 0;
    box-sizing: border-box;
    border: 1px solid #d4d4d4;
    font-size: 18px;
    line-height: 26px;
    color: #222;
}

.mark-btn.two {
    display: block;
    padding: 7px 0 0;
    text-align: center;
    line-height: 22px;
}

.mark-pill-row {
    display: flex;
    align-items: center;
    gap: 10px;
    margin: 13px 0 0 22px;
}

.pill.short {
    width: 169px;
}

/* Shelves and the view */
.view-col {
    width: 1349px;
    margin-left: 8px;
    display: flex;
    flex-direction: column;
    gap: 9px;
}

.shelf {
    height: 38px;
    display: flex;
    box-sizing: border-box;
    background-color: #f9f9f9;
    border: 1px solid #d4d4d4;
}

.shelf-label {
    width: 163px;
    display: flex;
    align-items: center;
    gap: 12px;
    padding-left: 9px;
    box-sizing: border-box;
    border-right: 1px solid #d4d4d4;
    color: #444;
}

.shelf-body {
    padding: 4px 0 0 3px;
}

.pill.wide {
    width: 215px;
}

.pill.date {
    justify-content: flex-start;
    gap: 9px;
    padding-left: 16px;
    padding-bottom: 3px;
    font-size: 18px;
}

.pill.date svg {
    margin-top: 3px;
}

.view {
    height: 717px;
    box-sizing: border-box;
    background-color: #fff;
    border: 1px solid #d4d4d4;
    padding: 12px 0 0 12px;
}

.view h2 {
    margin: 0 0 9px 2px;
    height: 45px;
    font-size: 32px;
    font-weight: 400;
    line-height: 45px;
    color: #333;
}

.grid-table {
    width: 661px;
    border-bottom: 1px solid #d4d4d4;
}

.t-row {
    height: 25px;
    display: grid;
    grid-template-columns: 124px 165px 180px 180px;
    padding: 0 6px;
    align-items: center;
    line-height: 25px;
    font-size: 18.800px;
    color: #4f4f4f;
    white-space: nowrap;
}

.t-row span {
    text-align: right;
}

.t-row span:first-child {
    text-align: left;
    color: #222;
}

.t-row:nth-child(odd):not(.t-head) {
    background-color: #f5f5f5;
}

.t-row.t-head {
    height: 22px;
    font-size: 19px;
    color: #666;
    border-bottom: 1px solid #d4d4d4;
}

.t-row.t-head span:first-child {
    font-size: 18px;
}

/* Tooltip over the field list */
.tooltip {
    position: absolute;
    left: 217px;
    top: 890px;
    width: 207px;
    height: 87px;
    box-sizing: border-box;
    padding: 2px 0 0 5px;
    background-color: #fff;
    border: 1px solid #666;
    box-shadow: 3px 3px 3px #999;
    font-size: 20.500px;
    line-height: 28px;
    color: #111;
    white-space: nowrap;
}

/* Sheet tabs and status bar */
.tabbar {
    height: 46px;
    display: flex;
    box-sizing: border-box;
    background-color: #e6e6e6;
    border-top: 1px solid #d4d4d4;
    border-bottom: 1px solid #d4d4d4;
    font-size: 19.500px;
    color: #666;
}

.ds-tab {
    width: 197px;
    display: flex;
    align-items: center;
    gap: 7px;
    padding-left: 12px;
    box-sizing: border-box;
    border-right: 1px solid #d4d4d4;
}

.sheet-tab {
    width: 140px;
    padding-left: 9px;
    box-sizing: border-box;
    line-height: 44px;
}

.sheet-tab.active {
    width: 97px;
    padding: 0;
    background-color: #fff;
    border-right: 1px solid #d4d4d4;
}

.add-tab {
    width: 32px;
    display: flex;
    align-items: center;
    justify-content: center;
    box-sizing: border-box;
    border-right: 1px solid #d4d4d4;
}

.statusbar {
    height: 30px;
    display: flex;
    align-items: center;
    padding-left: 5px;
    background-color: #ececec;
    font-size: 16.500px;
    color: #333;
}

.st-rows {
    margin-left: 41px;
}

.st-sum {
    margin-left: 46px;
    font-size: 16px;
}

.st-cells {
    margin-left: auto;
    height: 30px;
    display: flex;
    align-items: center;
}

.st-cells i {
    height: 30px;
    box-sizing: border-box;
    border-left: 1px solid #d4d4d4;
}

.st-cells .c1 {
    width: 188px;
}

.st-cells .c2 {
    width: 39px;
}

.st-cells .c3 {
    width: 39px;
}

.st-cells .c4 {
    width: 69px;
}

.st-nav {
    width: 73px;
    height: 30px;
    display: flex;
    align-items: center;
    justify-content: center;
    gap: 10px;
    box-sizing: border-box;
    border-left: 1px solid #d4d4d4;
    border-right: 1px solid #d4d4d4;
    fill: #bbb;
}

.st-views {
    width: 75px;
    display: flex;
    align-items: center;
    gap: 13px;
    padding-left: 11px;
    box-sizing: border-box;
}

/* Windows taskbar */
.taskbar {
    height: 60px;
    display: flex;
    align-items: center;
    background: linear-gradient(90deg, #dddbde, #dbd6d3 50%, #dcdbe2 75%, #e0dcdd);
}

.start {
    width: 73px;
    display: flex;
    justify-content: center;
}

.task-search {
    width: 513px;
    height: 56px;
    display: flex;
    align-items: center;
    gap: 19px;
    padding-left: 16px;
    box-sizing: border-box;
    background-color: #fff;
    font-size: 23px;
    color: #222;
}

.app {
    width: 75px;
    height: 60px;
    position: relative;
    display: flex;
    align-items: center;
    justify-content: center;
    flex: none;
}

.app.cortana {
    width: 76px;
}

.app.taskview {
    width: 73px;
    padding-right: 7px;
    box-sizing: border-box;
}

.app.open::after {
    content: "";
    position: absolute;
    left: 7px;
    right: 7px;
    bottom: 0;
    height: 3px;
    background-color: #0099bc;
}

.app.active {
    background-color: #f1f0f0;
}

.app.active::after {
    left: 1px;
    right: 1px;
}

.ebook {
    width: 36px;
    height: 36px;
    display: flex;
    flex-direction: column;
    align-items: center;
    justify-content: center;
    border-radius: 3px;
    background-color: #1e98e8;
    color: #fff;
    font-size: 8px;
    line-height: 10px;
}

.page-icon {
    width: 34px;
    height: 36px;
    display: flex;
    align-items: center;
    justify-content: center;
    background-color: #fff;
    box-shadow: 1px 1px 2px #aaa;
}

.tray {
    margin-left: auto;
    display: flex;
    align-items: center;
    padding-right: 19px;
    color: #111;
}

.weather {
    width: 108px;
    display: flex;
    align-items: center;
    gap: 16px;
    box-sizing: border-box;
    padding-left: 1px;
    font-size: 20px;
}

.tray-icon {
    width: 36px;
    display: flex;
    justify-content: center;
}

.clock {
    width: 112px;
    display: flex;
    flex-direction: column;
    align-items: center;
    gap: 5px;
    font-size: 17.500px;
    line-height: 24px;
}

.notify {
    width: 62px;
    position: relative;
    display: flex;
    justify-content: center;
}

.notify-badge {
    position: absolute;
    left: 30px;
    top: 10px;
    width: 24px;
    height: 24px;
    box-sizing: border-box;
    border: 1px solid #666;
    border-radius: 50%;
    background-color: #e0dcdd;
    text-align: center;
    font-size: 16px;
    font-weight: 700;
    line-height: 22px;
}
```
